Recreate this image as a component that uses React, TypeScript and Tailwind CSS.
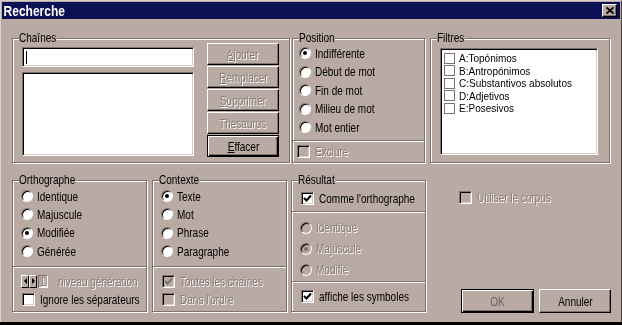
import React from 'react';

// Win95-style "Recherche" dialog
const BG = 'bg-[#b9aaa4]';
const DIS = 'text-[#877a76] [text-shadow:1px_1px_0_#ffffff]';

// the reference font is a narrow bitmap face, so text is squeezed horizontally
const Text = ({ children, disabled, center, color = 'text-black' }: { children: React.ReactNode; disabled?: boolean; center?: boolean; color?: string }) => (
    <span className={`inline-block whitespace-nowrap scale-x-[0.77] ${center ? 'origin-center' : 'origin-left'} ${disabled ? DIS : color}`}>{children}</span>
);

const GroupBox = ({ title, className, children }: { title?: string; className?: string; children?: React.ReactNode }) => (
    <div className={`relative border border-[#7f716d] shadow-[1px_1px_0_#ffffff,inset_1px_1px_0_#ffffff] ${className}`}>
        {title && <span className={`absolute -top-[8px] left-[6px] ${BG} pr-[1px] leading-[14px] whitespace-nowrap scale-x-[0.77] origin-left`}>{title}</span>}
        {children}
    </div>
);

const Separator = () => <div className="h-[2px] border-t border-t-[#7f716d] border-b border-b-white" />;

const Radio = ({ checked, disabled }: { checked?: boolean; disabled?: boolean }) => (
    <span className={`flex items-center justify-center shrink-0 w-[12px] h-[12px] rounded-full border border-t-[#7f716d] border-l-[#7f716d] border-r-white border-b-white shadow-[inset_1px_1px_0_#000000] ${disabled ? BG : 'bg-white'}`}>
        {checked && <span className={`w-[4px] h-[4px] rounded-full ${disabled ? 'bg-[#7f716d]' : 'bg-black'}`} />}
    </span>
);

const Check = ({ checked, disabled }: { checked?: boolean; disabled?: boolean }) => (
    <span className={`flex items-center justify-center shrink-0 w-[13px] h-[13px] border border-t-[#7f716d] border-l-[#7f716d] border-r-white border-b-white shadow-[inset_1px_1px_0_#000000,inset_-1px_-1px_0_#d9cdc9] ${disabled ? BG : 'bg-white'}`}>
        {checked && (
            <svg width="9" height="9" viewBox="0 0 9 9">
                <path d="M1 4 L3.5 6.5 L8 1.5" fill="none" stroke={disabled ? '#7f716d' : '#000'} strokeWidth="2" />
            </svg>
        )}
    </span>
);

const RadioRow = ({ label, checked, disabled, h = 'h-[18.5px]' }: { label: string; checked?: boolean; disabled?: boolean; h?: string }) => (
    <div className={`flex items-center gap-[4px] ${h}`}>
        <Radio checked={checked} disabled={disabled} />
        <Text disabled={disabled}>{label}</Text>
    </div>
);

const CheckRow = ({ label, checked, disabled, className }: { label: React.ReactNode; checked?: boolean; disabled?: boolean; className?: string }) => (
    <div className={`flex items-center gap-[5px] h-[18px] ${className}`}>
        <Check checked={checked} disabled={disabled} />
        <Text disabled={disabled}>{label}</Text>
    </div>
);

const Button = ({ children, disabled, isDefault, className, color }: { children: React.ReactNode; disabled?: boolean; isDefault?: boolean; className?: string; color?: string }) => (
    <div className={`flex items-center justify-center border ${isDefault
        ? 'border-black shadow-[inset_1px_1px_0_#ffffff,inset_-1px_-1px_0_#000000,inset_-2px_-2px_0_#7f716d]'
        : 'border-t-white border-l-white border-r-black border-b-black shadow-[inset_-1px_-1px_0_#7f716d]'} ${className}`}>
        <Text disabled={disabled} center color={color}>{children}</Text>
    </div>
);

const Sunken = ({ className, children }: { className?: string; children?: React.ReactNode }) => (
    <div className={`bg-white border border-t-[#7f716d] border-l-[#7f716d] border-r-white border-b-white shadow-[inset_1px_1px_0_#000000,inset_-1px_-1px_0_#d9cdc9] ${className}`}>
        {children}
    </div>
);

const filtres = ['A:Topónimos', 'B:Antropónimos', 'C:Substantivos absolutos', 'D:Adjetivos', 'E:Posesivos'];

const App: React.FC = () => {
    return (
        <div className={`w-[622px] h-[325px] ${BG} flex flex-col overflow-hidden font-['Liberation_Sans',Arial,sans-serif] text-[13px] leading-[15px] text-black`}>
            <div className="flex-1 flex flex-col border-t border-l border-t-[#d9d0cc] border-l-[#d9d0cc] border-r border-r-[#4a4040] p-[1px]">
                {/* title bar */}
                <div className="h-[17px] bg-[#0b1052] flex items-center justify-between">
                    <span className="pl-[2px] text-white font-bold text-[15px] leading-[17px] inline-block whitespace-nowrap scale-x-[0.8] origin-left">Recherche</span>
                    <div className={`mr-[3px] w-[15px] h-[13px] ${BG} flex items-center justify-center border border-t-white border-l-white border-r-black border-b-black shadow-[inset_-1px_-1px_0_#7f716d]`}>
                        <svg width="8" height="7" viewBox="0 0 8 7">
                            <path d="M0.5 0.5 L7.5 6.5 M7.5 0.5 L0.5 6.5" stroke="#000" strokeWidth="1.8" />
                        </svg>
                    </div>
                </div>

                <div className="flex flex-col pl-[10px] pt-[19px]">
                    {/* top row */}
                    <div className="flex items-start">
                        <GroupBox title="Chaînes" className="w-[278px] h-[125px] flex pt-[4px] pl-[9px]">
                            <div className="flex flex-col w-[172px] mt-[4px] gap-[5px]">
                                <Sunken className="h-[20px] flex items-center pl-[3px]">
                                    <span className="w-[1px] h-[13px] bg-black" />
                                </Sunken>
                                <Sunken className="h-[84px]" />
                            </div>
                            <div className="flex flex-col ml-[13px] gap-[1px] w-[72px]">
                                <Button disabled className="h-[22px]"><u>A</u>jouter</Button>
                                <Button disabled className="h-[22px]"><u>R</u>emplacer</Button>
                                <Button disabled className="h-[22px]"><u>S</u>upprimer</Button>
                                <Button disabled className="h-[22px]">Thesaurus</Button>
                                <Button isDefault className="h-[22px]"><u>E</u>ffacer</Button>
                            </div>
                        </GroupBox>

                        <GroupBox title="Position" className="ml-[2px] w-[133px] h-[125px] flex flex-col pt-[5px]">
                            <div className="flex flex-col pl-[6px]">
                                <RadioRow label="Indifférente" checked />
                                <RadioRow label="Début de mot" />
                                <RadioRow label="Fin de mot" />
                                <RadioRow label="Milieu de mot" />
                                <RadioRow label="Mot entier" />
                            </div>
                            <div className="mt-[3px]"><Separator /></div>
                            <CheckRow label="Exclure" disabled className="pl-[4px] h-[20px]" />
                        </GroupBox>

                        <GroupBox title="Filtres" className="ml-[5px] w-[180px] h-[125px] pt-[9px] pl-[9px]">
                            <Sunken className="w-[158px] h-[107px] pt-[3px] pl-[3px]">
                                {filtres.map((f) => (
                                    <div key={f} className="flex items-center gap-[4px] h-[12.5px] text-[11px] leading-[12px]">
                                        <span className="w-[11px] h-[11px] border border-[#7f716d] bg-white shrink-0" />
                                        <span className="inline-block whitespace-nowrap scale-x-[0.91] origin-left">{f}</span>
                                    </div>
                                ))}
                            </Sunken>
                        </GroupBox>
                    </div>

                    {/* bottom row */}
                    <div className="flex items-start mt-[17px]">
                        <GroupBox title="Orthographe" className="w-[135px] h-[132px] flex flex-col pt-[6px]">
                            <div className="flex flex-col pl-[8px]">
                                <RadioRow label="Identique" h="h-[18.3px]" />
                                <RadioRow label="Majuscule" h="h-[18.3px]" />
                                <RadioRow label="Modifiée" checked h="h-[18.3px]" />
                                <RadioRow label="Générée" h="h-[18.3px]" />
                            </div>
                            <div className="mt-[6px]"><Separator /></div>
                            <div className="flex items-center h-[18px] mt-[4px] pl-[8px]">
                                <div className="flex items-center">
                                    {['M5 1 L2 4 L5 7 Z', 'M2 1 L5 4 L2 7 Z'].map((d) => (
                                        <span key={d} className="w-[8px] h-[13px] flex items-center justify-center border border-t-white border-l-white border-r-black border-b-black">
                                            <svg width="6" height="8" viewBox="0 0 6 8"><path d={d} fill="#000" /></svg>
                                        </span>
                                    ))}
                                    <span className="w-[10px] h-[13px] ml-[1px] flex items-center justify-center border border-t-[#7f716d] border-l-[#7f716d] border-r-white border-b-white leading-[11px]">
                                        <Text disabled center>1</Text>
                                    </span>
                                </div>
                                <span className="ml-[10px]"><Text disabled>niveau génération</Text></span>
                            </div>
                            <CheckRow label="Ignore les séparateurs" className="pl-[9px]" />
                        </GroupBox>

                        <GroupBox title="Contexte" className="ml-[5px] w-[135px] h-[132px] flex flex-col pt-[6px]">
                            <div className="flex flex-col pl-[8px]">
                                <RadioRow label="Texte" checked h="h-[18.3px]" />
                                <RadioRow label="Mot" h="h-[18.3px]" />
                                <RadioRow label="Phrase" h="h-[18.3px]" />
                                <RadioRow label="Paragraphe" h="h-[18.3px]" />
                            </div>
                            <div className="mt-[6px]"><Separator /></div>
                            <CheckRow label="Toutes les chaînes" checked disabled className="pl-[9px] mt-[4px]" />
                            <CheckRow label="Dans l'ordre" disabled className="pl-[9px]" />
                        </GroupBox>

                        <GroupBox title="Résultat" className="ml-[4px] w-[135px] h-[132px] flex flex-col pt-[8px]">
                            <CheckRow label="Comme l'orthographe" checked className="pl-[9px]" />
                            <div className="mt-[4px]"><Separator /></div>
                            <div className="flex flex-col pl-[8px] pt-[4px]">
                                <RadioRow label="Identique" disabled h="h-[21px]" />
                                <RadioRow label="Majuscule" checked disabled h="h-[21px]" />
                                <RadioRow label="Modifié" disabled h="h-[21px]" />
                            </div>
                            <div className="mt-[1px]"><Separator /></div>
                            <CheckRow label="affiche les symboles" checked className="pl-[9px] mt-[4px]" />
                        </GroupBox>

                        <div className="ml-[4px] w-[181px] h-[133px] flex flex-col">
                            <CheckRow label="Utiliser le corpus" disabled className="pl-[29px] mt-[8px]" />
                            <div className="mt-auto flex pl-[31px] gap-[5px]">
                                <Button isDefault className="w-[73px] h-[24px]" color="text-[#6b6261]">OK</Button>
                                <Button className="w-[72px] h-[24px]">Annuler</Button>
                            </div>
                        </div>
                    </div>
                </div>
            </div>
            <div className="h-[3px] bg-black" />
        </div>
    );
};

export default App;
